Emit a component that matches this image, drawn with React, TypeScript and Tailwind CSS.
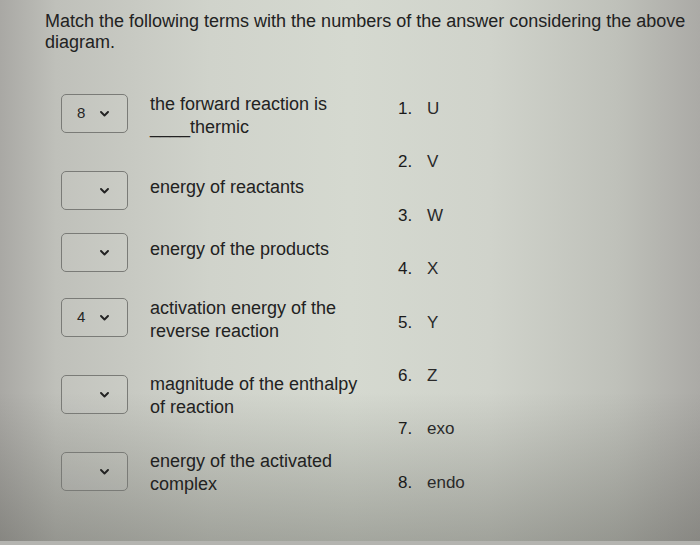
import React from "react";

// matching question: dropdown + term on the left, numbered answer list on the right
interface Term {
    value: string;
    lines: React.ReactNode[];
    rowClass: string;
    textClass: string;
}

const terms: Term[] = [
    {value: "8", lines: ["the forward reaction is", "____thermic"], rowClass: "h-[77px]", textClass: "-mt-[1px]"},
    {value: "", lines: ["energy of reactants"], rowClass: "h-[62px]", textClass: "mt-[5px]"},
    {value: "", lines: ["energy of the products"], rowClass: "h-[65px]", textClass: "mt-[5px]"},
    {value: "4", lines: ["activation energy of the", "reverse reaction"], rowClass: "h-[77px]", textClass: "-mt-[1px]"},
    {value: "", lines: ["magnitude of the enthalpy", "of reaction"], rowClass: "h-[77px]", textClass: "-mt-[2px]"},
    {value: "", lines: ["energy of the activated", "complex"], rowClass: "h-[60px]", textClass: "-mt-[2px]"},
];

const answers = ["U", "V", "W", "X", "Y", "Z", "exo", "endo"];

function Chevron() {
    return (
        <svg width="9" height="6" viewBox="0 0 9 6" fill="none" className="shrink-0">
            <path d="M1 1l3.5 3.5L8 1" stroke="#222" strokeWidth="1.9" strokeLinecap="round" strokeLinejoin="round"/>
        </svg>
    );
}

function AnswerSelect({value}: { value: string }) {
    return (
        <div className="w-[67px] h-[39px] shrink-0 rounded-[5px] border border-[#7a7b77] bg-white/5 flex items-center pl-[15px] pr-[18px]">
            <span className="w-[10px] text-[15px] text-[#262626]">{value}</span>
            <span className="flex-1"/>
            <Chevron/>
        </div>
    );
}

export default function App() {
    return (
        <div
            className="w-[700px] h-[545px] overflow-hidden flex flex-col font-['Liberation_Sans',Arial,sans-serif] text-[#222]
                bg-[linear-gradient(to_bottom,rgba(255,255,255,0)_0%,rgba(255,255,255,0)_72%,rgba(70,70,64,0.34)_99%),linear-gradient(to_right,#a9a8a4_0%,#bfc0ba_8%,#d0d3cb_30%,#d5d9d0_50%,#d0d3cb_70%,#bfc1ba_88%,#abaaa6_100%)]"
        >
            <div className="flex-1 pl-[45px] pt-[11px] w-[690px]">
                <p className="text-[18px] leading-[21px]">
                    Match the following terms with the numbers of the answer considering the above diagram.
                </p>

                <div className="flex mt-[40px]">
                    <div className="flex flex-col pl-[16px] w-[353px] pt-[1px]">
                        {terms.map((t, i) => (
                            <div key={i} className={`flex items-start gap-[22px] ${t.rowClass}`}>
                                <AnswerSelect value={t.value}/>
                                <div className={`text-[18px] leading-[23px] ${t.textClass}`}>
                                    {t.lines.map((l, j) => (
                                        <div key={j}>{l}</div>
                                    ))}
                                </div>
                            </div>
                        ))}
                    </div>

                    <ol className="flex flex-col gap-[30.4px] pt-[4px]">
                        {answers.map((a, i) => (
                            <li key={a} className="flex text-[17px] leading-[23px]">
                                <span className="w-[29px] text-[#1a1a1a]">{i + 1}.</span>
                                <span className="text-[#2a2a2a]">{a}</span>
                            </li>
                        ))}
                    </ol>
                </div>
            </div>
            {/* bezel edge along the bottom */}
            <div className="h-[4px] bg-[#b4b4b0]"/>
        </div>
    );
}
